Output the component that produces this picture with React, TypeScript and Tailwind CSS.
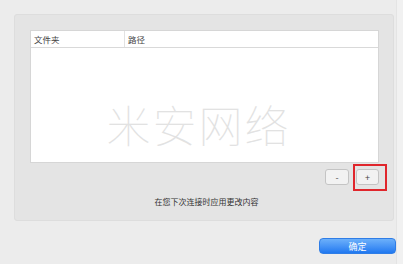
const CJK = "font-['Noto_Sans_CJK_SC','Noto_Sans',sans-serif]";

export default function App() {
  return (
    <div className={`flex h-[264px] w-[403px] overflow-hidden bg-[#ececec] ${CJK}`}>
      <div className="flex w-[396px] flex-col pl-[14px] pt-[14px]">
        {/* settings panel */}
        <div className="flex h-[207px] w-[380px] flex-col rounded-[3px] border border-[#dddddd] bg-[#e4e4e4] pl-[15px] pt-[15px]">
          <div className="flex h-[133px] w-[349px] flex-col border border-[#d6d6d6] bg-white">
            <div className="flex h-[17px] items-center border-b border-[#d9d9d9] text-[8.5px] leading-none text-[#444]">
              <div className="flex h-full w-[94px] items-center border-r border-[#e2e2e2] pl-[3px]">文件夹</div>
              <div className="pl-[3px]">路径</div>
            </div>
            <div className="flex flex-1 justify-center pt-[54px] pr-[12px]">
              <span className="text-[44px] leading-none font-thin tracking-[2px] text-[#e2e2e2]">米安网络</span>
            </div>
          </div>

          <div className="mt-[6px] flex w-[349px] justify-end gap-[7px]">
            <button className="flex h-[16px] w-[24px] items-center justify-center rounded-[3px] border border-[#c4c4c4] bg-[#f2f2f2] text-[9px] leading-none text-[#555]">
              -
            </button>
            <div className="relative">
              <button className="flex h-[16px] w-[23px] items-center justify-center rounded-[3px] border border-[#c4c4c4] bg-[#f2f2f2] text-[9px] leading-none text-[#444]">
                +
              </button>
              <div className="absolute top-[-5px] left-[-3px] h-[27px] w-[34px] border-2 border-[#e0262c]" />
            </div>
          </div>

          <div className="mt-[13px] flex w-[349px] justify-center pl-[4px] text-[8px] leading-none text-[#333]">
            在您下次连接时应用更改内容
          </div>
        </div>

        <div className="mt-[17px] flex justify-end">
          <button className="flex h-[16px] w-[77px] items-center justify-center rounded-[4px] border border-[#2f7de6] bg-gradient-to-b from-[#6cb0fa] to-[#1f78f0] text-[9px] leading-none text-white">
            确定
          </button>
        </div>
      </div>
      <div className="h-full flex-1 border-l border-[#e4e4e4] bg-[#f1f1f1]" />
    </div>
  );
}
